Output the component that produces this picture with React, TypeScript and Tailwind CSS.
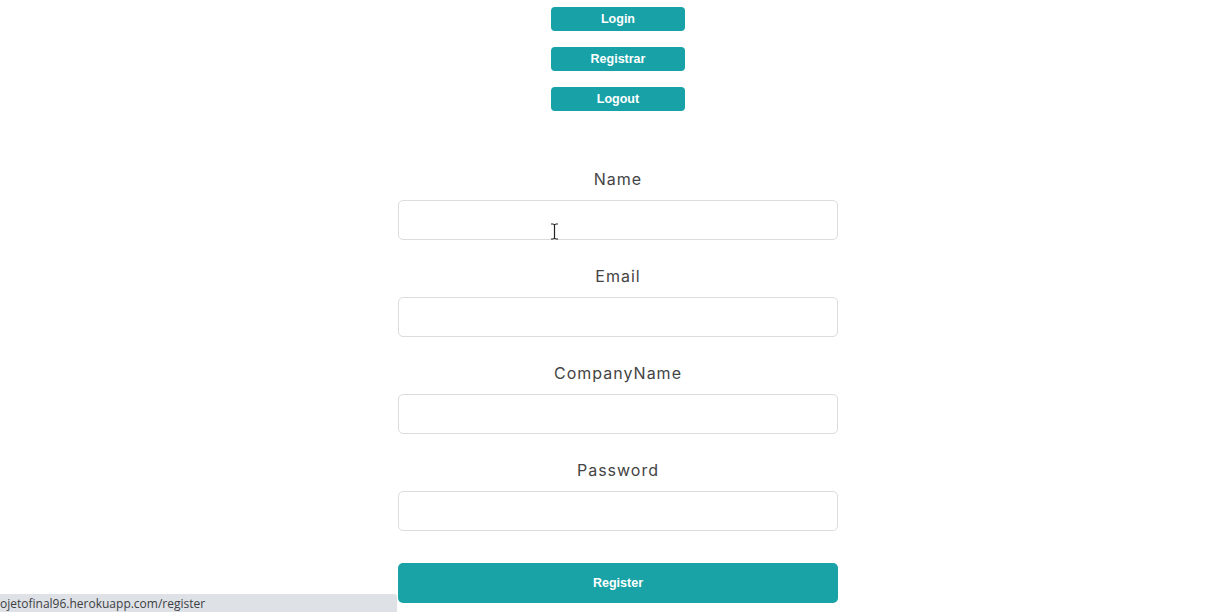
import React from 'react';

const labelFont = { fontFamily: 'Inter, "Open Sans", sans-serif' };

function Field({ label }: { label: string }) {
  return (
    <div className="flex flex-col items-center">
      <label className="h-[24px] leading-[24px] text-[16px] tracking-[1px] text-[#444] mb-[9px]" style={labelFont}>
        {label}
      </label>
      <input className="w-[440px] h-[40px] rounded-[5px] border border-[#dcdcdc] bg-white outline-none" />
    </div>
  );
}

export default function App() {
  const navBtn =
    'w-[134px] h-[24px] rounded-[4px] bg-[#18a2a8] text-white text-[12.5px] font-bold flex items-center justify-center';
  return (
    <main className="relative w-[1225px] h-[612px] bg-white overflow-hidden" style={{ fontFamily: '"Liberation Sans", Arial, sans-serif' }}>
      <div className="flex flex-col items-center pl-[11px] pt-[7px] gap-[16px]">
        <button className={navBtn}>Login</button>
        <button className={navBtn}>Registrar</button>
        <button className={navBtn}>Logout</button>
      </div>

      <form className="flex flex-col items-center gap-[24px] mt-[56px] pl-[11px]">
        <Field label="Name" />
        <Field label="Email" />
        <Field label="CompanyName" />
        <Field label="Password" />
        <button
          type="button"
          className="mt-[8px] w-[440px] h-[40px] rounded-[5px] bg-[#19a3a6] text-white text-[12.5px] font-bold"
        >
          Register
        </button>
      </form>

      {/* text cursor */}
      <svg className="absolute left-[550px] top-[223px]" width="9" height="17" viewBox="0 0 9 17">
        <path d="M1 1h2.5M5.5 1H8M4.5 1.5v14M1 16h2.5M5.5 16H8M3.5 1.5h2M3.5 15.5h2" stroke="#222" strokeWidth="1.2" fill="none" />
      </svg>

      {/* browser status bar */}
      <div className="absolute left-0 bottom-0 w-[397px] h-[18px] bg-[#dee1e6] rounded-tr-[3px] flex items-end pb-[0px]">
        <span className="text-[12px] leading-[16px] text-[#3c4043]" style={{ fontFamily: '"Open Sans", sans-serif' }}>
          ojetofinal96.herokuapp.com/register
        </span>
      </div>
    </main>
  );
}
